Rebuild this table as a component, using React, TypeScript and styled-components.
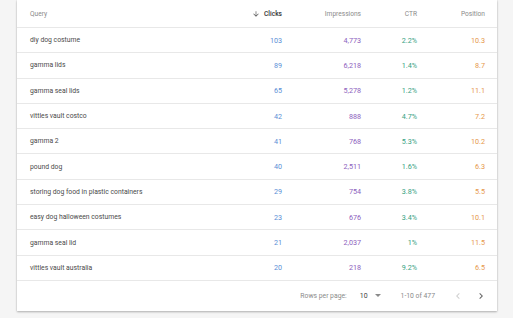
import styled, { createGlobalStyle } from 'styled-components'

const GlobalStyle = createGlobalStyle`
  html, body {
    margin: 0;
    padding: 0;
    background: #f5f5f5;
    font-family: Roboto, 'Liberation Sans', sans-serif;
  }
`

type Row = {
  query: string
  clicks: number
  impressions: string
  ctr: string
  position: string
}

const rows: Row[] = [
  { query: 'diy dog costume', clicks: 103, impressions: '4,773', ctr: '2.2%', position: '10.3' },
  { query: 'gamma lids', clicks: 89, impressions: '6,218', ctr: '1.4%', position: '8.7' },
  { query: 'gamma seal lids', clicks: 65, impressions: '5,278', ctr: '1.2%', position: '11.1' },
  { query: 'vittles vault costco', clicks: 42, impressions: '888', ctr: '4.7%', position: '7.2' },
  { query: 'gamma 2', clicks: 41, impressions: '768', ctr: '5.3%', position: '10.2' },
  { query: 'pound dog', clicks: 40, impressions: '2,511', ctr: '1.6%', position: '6.3' },
  { query: 'storing dog food in plastic containers', clicks: 29, impressions: '754', ctr: '3.8%', position: '5.5' },
  { query: 'easy dog halloween costumes', clicks: 23, impressions: '676', ctr: '3.4%', position: '10.1' },
  { query: 'gamma seal lid', clicks: 21, impressions: '2,037', ctr: '1%', position: '11.5' },
  { query: 'vittles vault australia', clicks: 20, impressions: '218', ctr: '9.2%', position: '6.5' },
]

export default function App() {
  return (
    <Page>
      <GlobalStyle />
      <Card>
        <HeaderRow>
          <HeadCell>Query</HeadCell>
          <HeadCell $align="right" $active>
            <SortArrow viewBox="0 0 24 24">
              <path d="M20 12l-1.41-1.41L13 16.17V4h-2v12.17l-5.58-5.59L4 12l8 8 8-8z" />
            </SortArrow>
            Clicks
          </HeadCell>
          <HeadCell $align="right">Impressions</HeadCell>
          <HeadCell $align="right">CTR</HeadCell>
          <HeadCell $align="right">Position</HeadCell>
        </HeaderRow>
        {rows.map((row) => (
          <DataRow key={row.query}>
            <QueryCell>{row.query}</QueryCell>
            <NumCell $color="#5b8fd6">{row.clicks}</NumCell>
            <NumCell $color="#8c62bd">{row.impressions}</NumCell>
            <NumCell $color="#37a283">{row.ctr}</NumCell>
            <NumCell $color="#e6984a">{row.position}</NumCell>
          </DataRow>
        ))}
        <Footer>
          <FooterLabel>Rows per page:</FooterLabel>
          <PageSize>
            10
            <Caret viewBox="0 0 10 5">
              <path d="M0 0l5 5 5-5z" />
            </Caret>
          </PageSize>
          <Range>1-10 of 477</Range>
          <NavButton $disabled>
            <svg viewBox="0 0 24 24">
              <path d="M15.41 7.41L14 6l-6 6 6 6 1.41-1.41L10.83 12z" />
            </svg>
          </NavButton>
          <NavButton>
            <svg viewBox="0 0 24 24">
              <path d="M10 6L8.59 7.41 13.17 12l-4.58 4.59L10 18l6-6z" />
            </svg>
          </NavButton>
        </Footer>
      </Card>
    </Page>
  )
}

const Page = styled.div`
  padding: 0 16px 0 17px;
  height: 318px;
  box-sizing: border-box;
`

const Card = styled.div`
  width: 480px;
  background: #fff;
  box-shadow: 0 1px 2px rgba(0, 0, 0, 0.28), 0 0 1px rgba(0, 0, 0, 0.12);
`

const grid = `
  display: grid;
  grid-template-columns: 187px 65px 79px 56px 68px;
  padding: 0 12px 0 13px;
  align-items: center;
  border-bottom: 1px solid #e8e8e8;
`

const HeaderRow = styled.div`
  ${grid}
  height: 28px;
  box-sizing: border-box;
`

const HeadCell = styled.div<{ $align?: string; $active?: boolean }>`
  display: flex;
  align-items: center;
  justify-content: ${(p) => (p.$align === 'right' ? 'flex-end' : 'flex-start')};
  font-size: 6.6px;
  color: ${(p) => (p.$active ? '#333' : '#8a8a8a')};
  font-weight: ${(p) => (p.$active ? 500 : 400)};
`

const SortArrow = styled.svg`
  width: 8px;
  height: 8px;
  fill: #555;
  margin-right: 4px;
`

const DataRow = styled.div`
  ${grid}
  height: 25.3px;
  box-sizing: border-box;
`

const QueryCell = styled.div`
  font-size: 6.8px;
  color: #4a4a4a;
  white-space: nowrap;
`

const NumCell = styled.div<{ $color: string }>`
  font-size: 7.2px;
  color: ${(p) => p.$color};
  text-align: right;
`

const Footer = styled.div`
  display: flex;
  align-items: center;
  justify-content: flex-end;
  height: 30px;
  padding-right: 10px;
  font-size: 6.8px;
  color: #8a8a8a;
`

const FooterLabel = styled.span`
  margin-right: 13px;
`

const PageSize = styled.span`
  display: flex;
  align-items: center;
  color: #444;
  font-size: 7px;
  margin-right: 20px;
`

const Caret = styled.svg`
  width: 6px;
  height: 3px;
  fill: #8a8a8a;
  margin-left: 7px;
`

const Range = styled.span`
  margin-right: 6px;
`

const NavButton = styled.span<{ $disabled?: boolean }>`
  display: flex;
  width: 12px;
  height: 12px;
  margin-left: 11px;
  svg {
    width: 12px;
    height: 12px;
    fill: ${(p) => (p.$disabled ? '#cfcfcf' : '#666')};
  }
`
